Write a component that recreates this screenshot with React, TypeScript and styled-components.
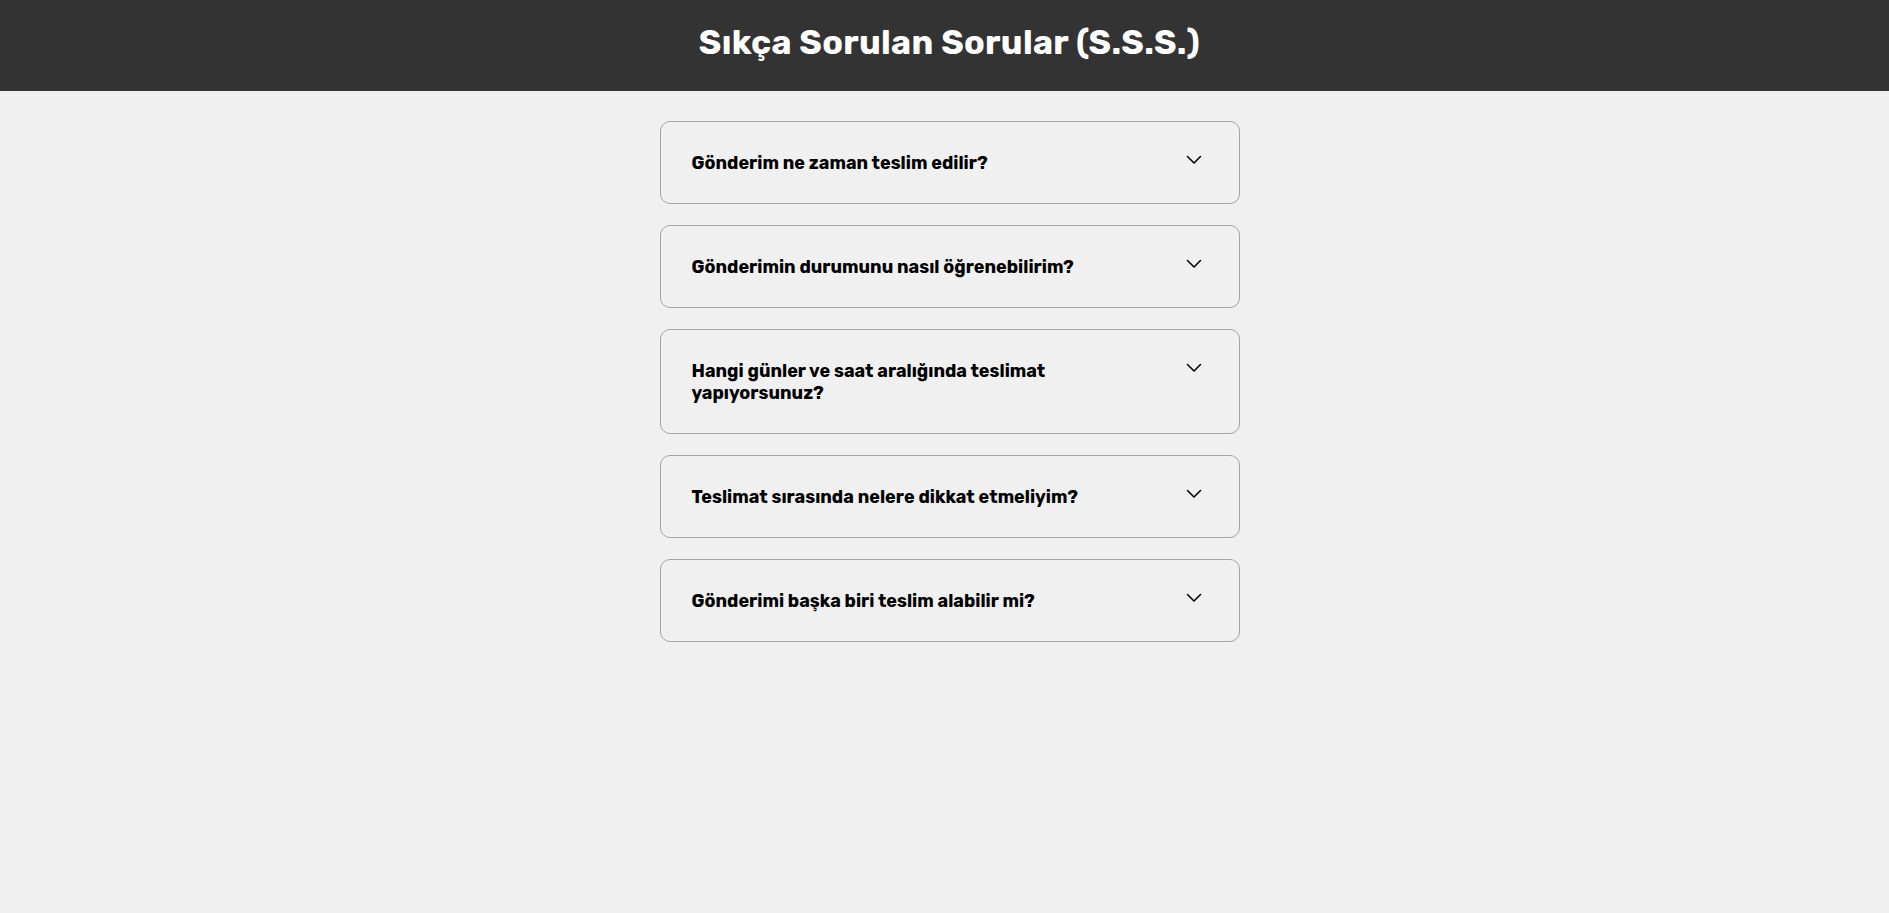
import React, { FC } from 'react';
import styled, { createGlobalStyle } from 'styled-components';

const GlobalStyle = createGlobalStyle`
  * {
    box-sizing: border-box;
  }
  body {
    margin: 0;
    background: #f0f0f0;
    font-family: 'Rubik', 'Inter', 'Noto Sans', sans-serif;
    color: #000;
  }
`;

const StyledHeader = styled.header`
  display: flex;
  align-items: center;
  justify-content: center;
  height: 91px;
  padding: 0 0 6px 10px;
  background: #333333;
`;

const StyledTitle = styled.h1`
  margin: 0;
  color: #ffffff;
  font-size: 34px;
  font-weight: 700;
  letter-spacing: 0.3px;
`;

const StyledMain = styled.main`
  display: flex;
  justify-content: center;
  padding: 30px 0 40px 10px;
`;

const StyledList = styled.div`
  display: flex;
  flex-direction: column;
  gap: 21px;
  width: 580px;
`;

const StyledItem = styled.div`
  display: flex;
  align-items: flex-start;
  gap: 24px;
  padding: 30px 30px 29px 31px;
  border: 1px solid #a3a3a3;
  border-radius: 10px;
  cursor: pointer;
`;

const StyledQuestion = styled.h3`
  flex: 1;
  margin: 0;
  font-size: 18px;
  font-weight: 700;
  line-height: 22px;
`;

const StyledChevron = styled.svg`
  flex: none;
  width: 16px;
  height: 16px;
  margin: 0 7px 0 0;
`;

const Chevron: FC = () => (
  <StyledChevron viewBox="0 0 16 16" fill="none">
    <path d="M1.5 4.5 8 11l6.5-6.5" stroke="#000" strokeWidth="1.5" strokeLinecap="round" strokeLinejoin="round" />
  </StyledChevron>
);

const questions = [
  'Gönderim ne zaman teslim edilir?',
  'Gönderimin durumunu nasıl öğrenebilirim?',
  'Hangi günler ve saat aralığında teslimat yapıyorsunuz?',
  'Teslimat sırasında nelere dikkat etmeliyim?',
  'Gönderimi başka biri teslim alabilir mi?',
];

const App: FC = () => (
  <>
    <GlobalStyle />
    <StyledHeader>
      <StyledTitle>Sıkça Sorulan Sorular (S.S.S.)</StyledTitle>
    </StyledHeader>
    <StyledMain>
      <StyledList>
        {questions.map(question => (
          <StyledItem key={question}>
            <StyledQuestion>{question}</StyledQuestion>
            <Chevron />
          </StyledItem>
        ))}
      </StyledList>
    </StyledMain>
  </>
);

export default App;
